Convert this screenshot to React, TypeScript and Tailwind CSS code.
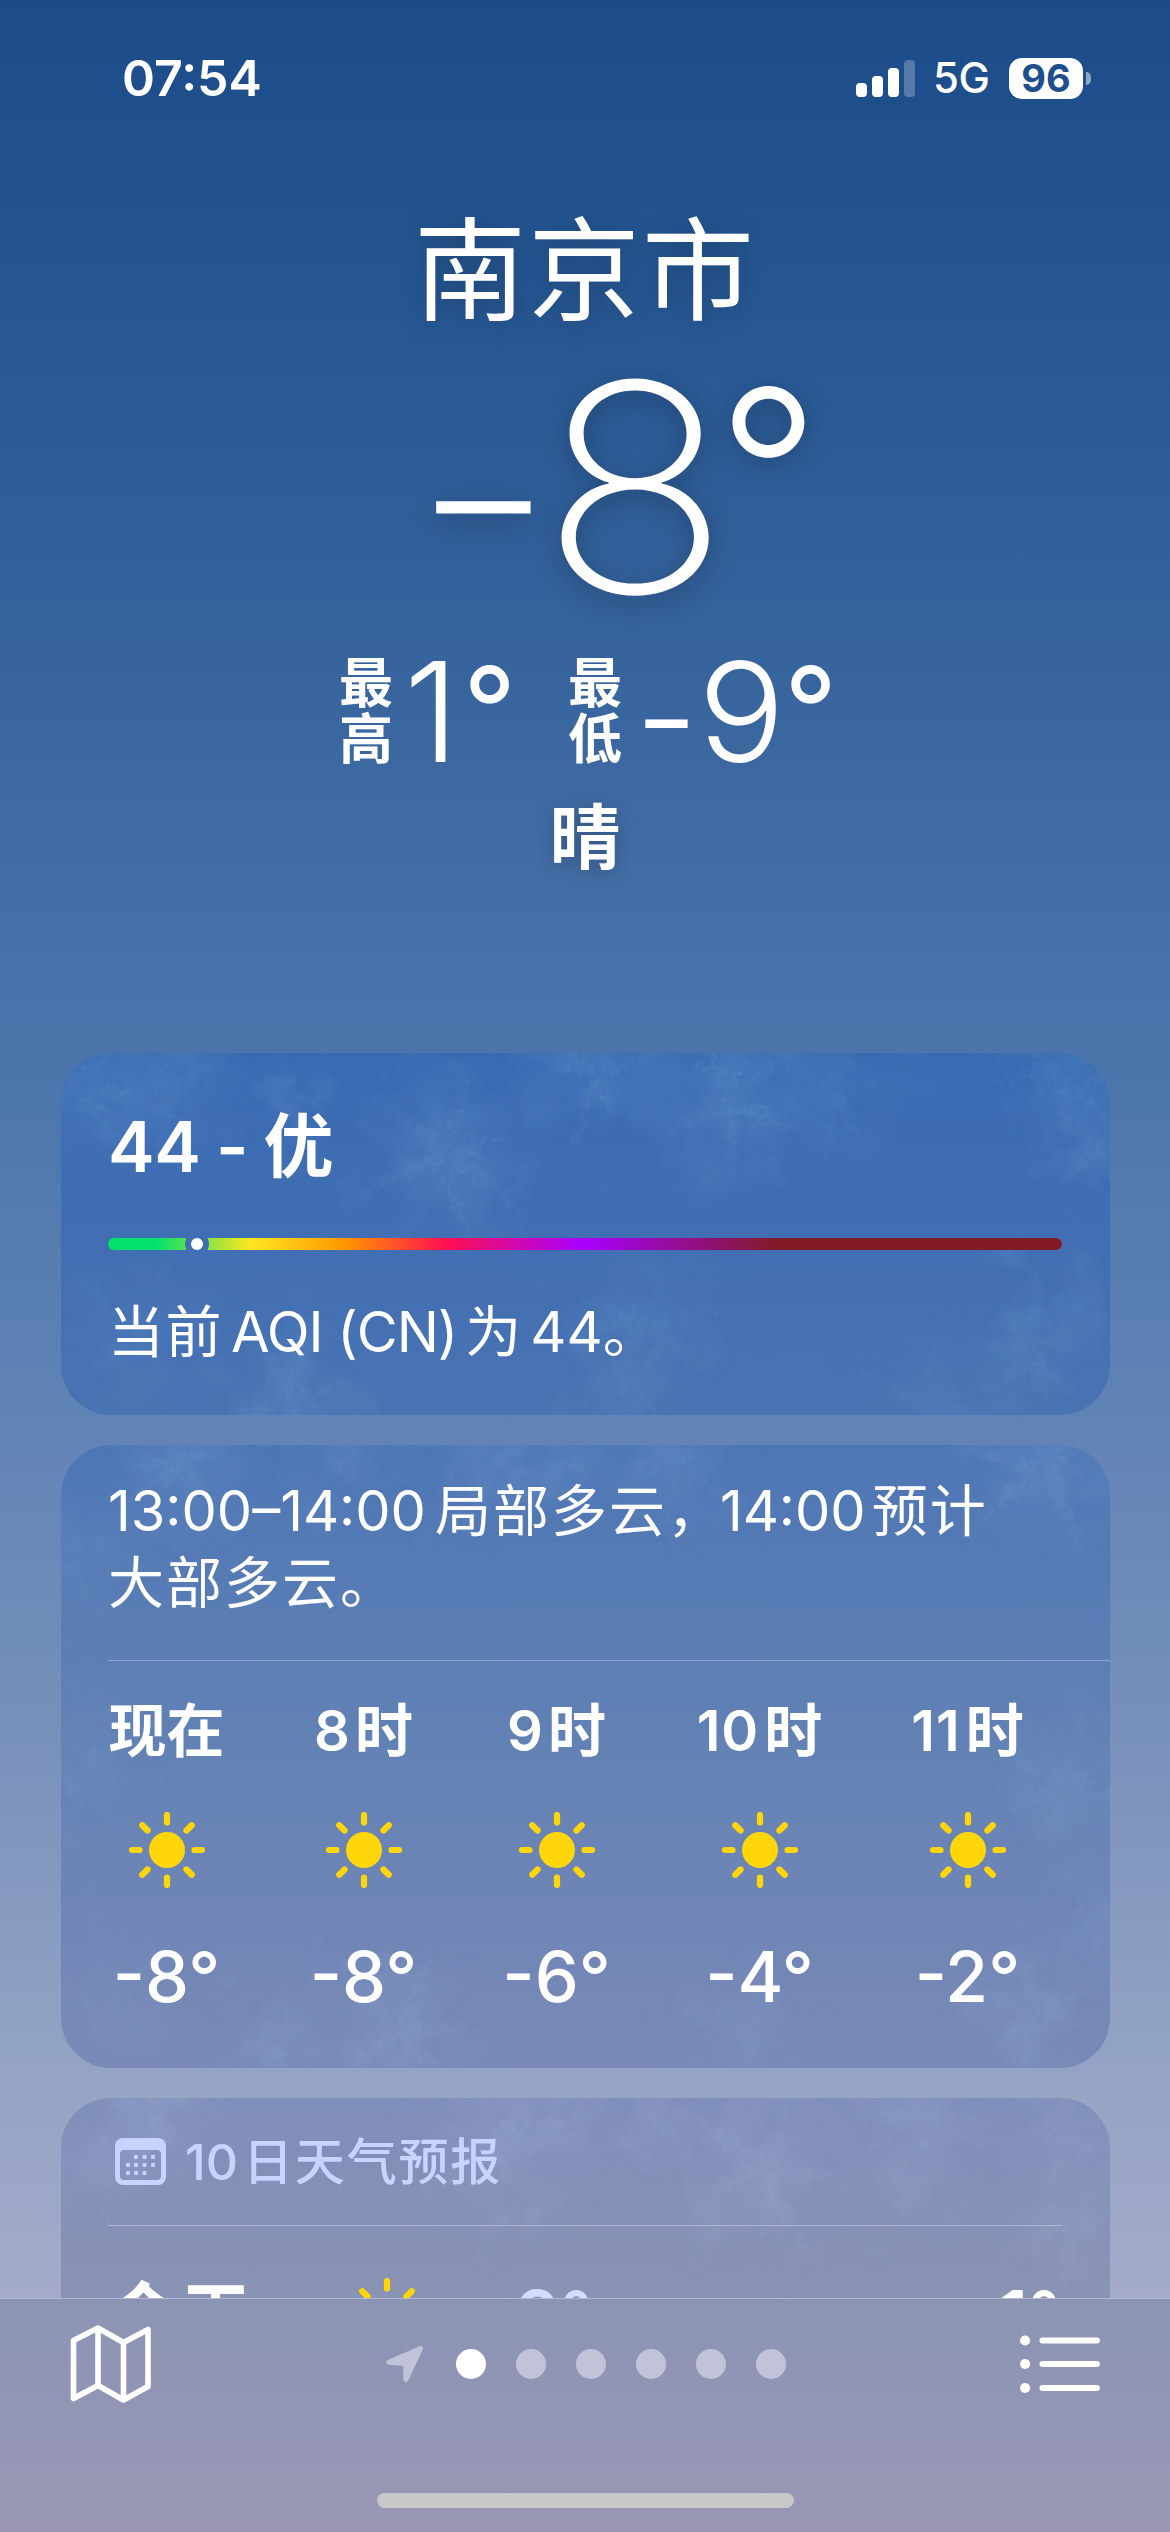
import { type ReactNode } from "react";
import { clsx } from "clsx";

type Flake = { x: number; y: number; r: number; o: number };

const AQI_FLAKES: Flake[] = [
  { x: 390, y: 97, r: 85, o: 1 },
  { x: 665, y: 42, r: 95, o: 1 },
  { x: 535, y: 20, r: 80, o: 0.9 },
  { x: 222, y: 42, r: 40, o: 0.8 },
  { x: 25, y: 30, r: 90, o: 0.8 },
  { x: 115, y: 25, r: 75, o: 0.7 },
  { x: 775, y: 35, r: 75, o: 0.5 },
  { x: 1005, y: 25, r: 75, o: 0.8 },
  { x: 1028, y: 100, r: 50, o: 0.8 },
  { x: 985, y: 252, r: 40, o: 0.6 },
  { x: 965, y: 305, r: 70, o: 0.7 },
  { x: 585, y: 270, r: 75, o: 0.6 },
  { x: 228, y: 352, r: 80, o: 0.9 },
  { x: 70, y: 290, r: 80, o: 0.5 },
  { x: 560, y: 345, r: 60, o: 0.6 },
  { x: 870, y: 350, r: 70, o: 0.5 },
];

const HOURLY_FLAKES: Flake[] = [
  { x: 125, y: 15, r: 75, o: 0.9 },
  { x: 280, y: 10, r: 60, o: 0.7 },
  { x: 425, y: 15, r: 75, o: 0.7 },
  { x: 495, y: 15, r: 50, o: 0.7 },
  { x: 610, y: 20, r: 80, o: 0.7 },
  { x: 980, y: 15, r: 90, o: 1 },
  { x: 25, y: 110, r: 80, o: 0.5 },
  { x: 20, y: 330, r: 90, o: 0.5 },
  { x: 45, y: 560, r: 90, o: 0.5 },
  { x: 213, y: 595, r: 60, o: 0.9 },
  { x: 335, y: 590, r: 80, o: 1 },
  { x: 675, y: 585, r: 70, o: 0.6 },
  { x: 970, y: 565, r: 70, o: 0.9 },
  { x: 1005, y: 340, r: 80, o: 0.7 },
  { x: 1040, y: 480, r: 70, o: 0.6 },
];

const DAILY_FLAKES: Flake[] = [
  { x: 95, y: 12, r: 70, o: 1 },
  { x: 30, y: 60, r: 80, o: 0.6 },
  { x: 430, y: 35, r: 80, o: 0.8 },
  { x: 480, y: 15, r: 60, o: 0.8 },
  { x: 592, y: 32, r: 50, o: 0.8 },
  { x: 705, y: 75, r: 90, o: 1 },
  { x: 850, y: 12, r: 65, o: 0.9 },
  { x: 465, y: 100, r: 60, o: 0.5 },
  { x: 850, y: 90, r: 60, o: 0.6 },
  { x: 1005, y: 30, r: 80, o: 0.8 },
  { x: 1015, y: 130, r: 65, o: 0.8 },
];

function makeRandom(seed: number) {
  let s = seed;
  return () => {
    s = (s * 16807) % 2147483647;
    return s / 2147483647;
  };
}

// One ice flower: crooked arms with short barbs that get shorter toward the tip.
function flakePath({ x, y, r }: Flake, seed: number) {
  const rand = makeRandom(seed * 7919 + 13);
  const arms = 6;
  const start = rand() * Math.PI;
  let d = "";
  for (let a = 0; a < arms; a += 1) {
    let angle = start + (a / arms) * Math.PI * 2 + (rand() - 0.5) * 0.7;
    const length = r * (0.6 + rand() * 0.8);
    let px = x;
    let py = y;
    for (let t = 0; t < length; t += 3) {
      angle += (rand() - 0.5) * 0.14;
      px += Math.cos(angle) * 3;
      py += Math.sin(angle) * 3;
      const barb = (1 - t / length) * r * 0.24 * (0.4 + rand());
      for (const side of [-1, 1]) {
        const b = angle + side * (0.3 + rand() * 0.7);
        d += `M${px.toFixed(1)} ${py.toFixed(1)}l${(Math.cos(b) * barb).toFixed(1)} ${(Math.sin(b) * barb).toFixed(1)}`;
      }
    }
  }
  return d;
}

function Frost({ id, flakes, color }: { id: string; flakes: Flake[]; color: string }) {
  return (
    <svg className="pointer-events-none absolute inset-0 h-full w-full" aria-hidden="true">
      <defs>
        <filter id={`${id}-rough`} x="-10%" y="-10%" width="120%" height="120%">
          <feTurbulence type="fractalNoise" baseFrequency="0.14" numOctaves="3" seed="4" result="noise" />
          <feDisplacementMap in="SourceGraphic" in2="noise" scale="20" xChannelSelector="R" yChannelSelector="G" />
          <feGaussianBlur stdDeviation="0.8" />
        </filter>
        <filter id={`${id}-cloud`} x="-10%" y="-10%" width="120%" height="120%">
          <feTurbulence type="fractalNoise" baseFrequency="0.018" numOctaves="5" seed="9" result="noise" />
          <feDisplacementMap in="SourceGraphic" in2="noise" scale="150" xChannelSelector="R" yChannelSelector="G" />
          <feGaussianBlur stdDeviation="1.5" />
        </filter>
        <radialGradient id={`${id}-haze`}>
          <stop offset="0" stopColor={color} stopOpacity="0.14" />
          <stop offset="1" stopColor={color} stopOpacity="0" />
        </radialGradient>
      </defs>
      <g filter={`url(#${id}-cloud)`}>
        {flakes.map((f, i) => (
          <circle key={i} cx={f.x} cy={f.y} r={f.r * 1.15} fill={`url(#${id}-haze)`} opacity={f.o} />
        ))}
      </g>
      <g filter={`url(#${id}-rough)`} stroke={color} strokeWidth="0.9" fill="none">
        {flakes.map((f, i) => (
          <path key={i} d={flakePath(f, i + id.length)} opacity={f.o * 0.15} />
        ))}
      </g>
    </svg>
  );
}

function Card({ className, children }: { className?: string; children: ReactNode }) {
  return (
    <section className={clsx("relative mx-auto w-[1049px] shrink-0 overflow-hidden rounded-[50px]", className)}>
      {children}
    </section>
  );
}

function SunIcon() {
  return (
    <svg viewBox="-38 -38 76 76" className="h-[76px] w-[76px] shrink-0">
      <circle r="18" fill="#ffd60a" />
      {[0, 45, 90, 135, 180, 225, 270, 315].map((deg) => (
        <line
          key={deg}
          y1="-35"
          y2="-27.5"
          transform={`rotate(${deg})`}
          stroke="#ffd60a"
          strokeWidth="6.2"
          strokeLinecap="round"
        />
      ))}
    </svg>
  );
}

function CalendarIcon() {
  const dots = [
    [21, 19], [29.5, 19], [38, 19],
    [13, 27], [21, 27], [29.5, 27], [38, 27],
    [13, 35], [21, 35], [29.5, 35],
  ];
  return (
    <svg viewBox="0 0 51 47" className="h-[47px] w-[51px]" fill="#c6d4ff">
      <path
        fillRule="evenodd"
        d="M8 0H43A8 8 0 0 1 51 8V39A8 8 0 0 1 43 47H8A8 8 0 0 1 0 39V8A8 8 0 0 1 8 0ZM9 12A4 4 0 0 0 5 16V38A4 4 0 0 0 9 42H42A4 4 0 0 0 46 38V16A4 4 0 0 0 42 12Z"
      />
      {dots.map(([x, y]) => (
        <rect key={`${x}-${y}`} x={x - 2} y={y - 2} width="4" height="4" rx="1" />
      ))}
    </svg>
  );
}

function MapIcon() {
  return (
    <svg viewBox="0 0 84 84" className="h-[84px] w-[84px]" fill="none" stroke="#fff" strokeWidth="5.6" strokeLinejoin="round">
      <path d="M4.5 18.5L29 6L54.5 20.5L79 7.5V64.5L54.5 78L29 63.5L4.5 76.5Z" />
      <path d="M29 6V63.5M54.5 20.5V78" />
    </svg>
  );
}

function ListIcon() {
  return (
    <svg viewBox="0 0 80 60" className="h-[60px] w-[80px]" stroke="#fff" strokeWidth="5.8" strokeLinecap="round">
      {[6.5, 30, 54].map((y) => (
        <g key={y}>
          <circle cx="5.1" cy={y} r="5.1" fill="#fff" stroke="none" />
          <line x1="22.4" x2="77" y1={y} y2={y} />
        </g>
      ))}
    </svg>
  );
}

function StatusBar() {
  return (
    <header className="flex h-[156px] shrink-0 items-center">
      <span className="ml-[122px] w-[200px] text-[50px] leading-none font-semibold">07:54</span>
      <div className="ml-[534px] flex h-[38px] items-end gap-[5px]">
        <i className="h-[14px] w-[11px] rounded-[4px] bg-white" />
        <i className="h-[21px] w-[11px] rounded-[4px] bg-white" />
        <i className="h-[29px] w-[11px] rounded-[4px] bg-white" />
        <i className="h-[37px] w-[11px] rounded-[4px] bg-white/25" />
      </div>
      <span className="ml-[18px] w-[60px] text-[42px] leading-none font-medium tracking-[-0.5px]">5G</span>
      <div className="ml-[16px] flex h-[41px] w-[74px] items-center justify-center rounded-[13px] bg-white text-[38px] leading-none font-bold text-[#1e4e8b]">
        96
      </div>
      <i className="ml-[3px] h-[13px] w-[5px] rounded-r-full bg-white/50" />
    </header>
  );
}

function Hero() {
  return (
    <div className="flex shrink-0 flex-col items-center">
      <h1 className="mt-[55px] h-[120px] text-[112px] leading-[120px] font-normal tracking-[2px] [text-shadow:0_4px_24px_rgba(0,0,0,0.22)]">
        南京市
      </h1>
      <div className="mt-[26px] flex h-[260px] w-[370px] items-start pl-[10px] text-[291px] font-extralight whitespace-nowrap [text-shadow:0_6px_26px_rgba(0,0,0,0.25)]">
        <span className="w-[137px] shrink-0 origin-left scale-x-[1.13] leading-[271px]">-</span>
        <span className="w-[170px] shrink-0 scale-x-[1.08] text-center leading-[260px]">8</span>
        <span className="shrink-0 text-[226px] leading-none font-[270]">°</span>
      </div>
      <div className="mt-[39px] flex h-[112px] w-[492px] items-start text-[139px] font-light whitespace-nowrap">
        <span className="mr-[11px] w-[54px] shrink-0 text-[54px] leading-[56px] font-semibold whitespace-normal">最高</span>
        <span className="w-[59px] shrink-0 leading-[112px]">1</span>
        <span className="w-[105px] shrink-0 text-[117px] leading-[106px] font-[400]">°</span>
        <span className="mr-[13px] w-[54px] shrink-0 text-[54px] leading-[56px] font-semibold whitespace-normal">最低</span>
        <span className="w-[63px] shrink-0 leading-[122px]">-</span>
        <span className="w-[86px] shrink-0 origin-left scale-x-[1.04] leading-[112px]">9</span>
        <span className="shrink-0 text-[117px] leading-[106px] font-[400]">°</span>
      </div>
      <p className="mt-[26px] h-[86px] text-[71px] leading-[86px] font-bold [text-shadow:0_4px_20px_rgba(0,0,0,0.22)]">晴</p>
    </div>
  );
}

function AqiCard() {
  return (
    <Card className="h-[362px] bg-linear-to-b from-[#396ab2] to-[#4973b3]">
      <Frost id="aqi" flakes={AQI_FLAKES} color="#8ec6e4" />
      <div className="relative flex flex-col px-[47.5px]">
        <p className="mt-[52px] h-[84px] text-[70px] leading-[84px] font-semibold tracking-[-0.3px] [word-spacing:-2px]">44 - 优</p>
        <div className="mt-[49px] flex h-[12px] items-center overflow-hidden rounded-full bg-[linear-gradient(90deg,#00e26b_5%,#ffe620_15%,#ff9500_25%,#ff1050_35.3%,#a800ff_49.7%,#821a28_70%)]">
          <div className="ml-[77px] flex h-[24px] w-[24px] shrink-0 items-center justify-center rounded-full bg-[#3d6eb2]">
            <div className="h-[12px] w-[12px] rounded-full bg-white" />
          </div>
        </div>
        <p className="mt-[46px] flex h-[72px] text-[56px] leading-[72px] whitespace-nowrap">
          <span className="mr-[8px] tracking-[1.5px]">当前</span>
          <span className="mr-[8px] tracking-[-1px]">AQI (CN)</span>
          <span className="mr-[9px]">为</span>
          <span>44。</span>
        </p>
      </div>
    </Card>
  );
}

const HOURS = [
  { num: "", unit: "现在", temp: "-8°", width: "w-[116px] ml-[48px]" },
  { num: "8", unit: "时", temp: "-8°", width: "w-[100px] ml-[89px]" },
  { num: "9", unit: "时", temp: "-6°", width: "w-[100px] ml-[93px]" },
  { num: "10", unit: "时", temp: "-4°", width: "w-[126px] ml-[90px]" },
  { num: "11", unit: "时", temp: "-2°", width: "w-[116px] ml-[87px]" },
];

function HourlyCard() {
  return (
    <Card className="mt-[30px] h-[623px] bg-linear-to-b from-[#4d76b5] via-[#6382b4] to-[#7a89b7]">
      <Frost id="hourly" flakes={HOURLY_FLAKES} color="#9cc4e6" />
      <div className="relative">
        <div className="ml-[47.5px] h-[216px] border-b border-white/30 pt-[30px] text-[56px] leading-[72px] whitespace-nowrap">
          <p className="flex">
            <span className="mr-[9px]">13:00–14:00</span>
            <span className="mr-[-5px] tracking-[2px]">局部多云，</span>
            <span className="mr-[6px]">14:00</span>
            <span className="tracking-[2px]">预计</span>
          </p>
          <p className="tracking-[2px]">大部多云。</p>
        </div>
        <div className="flex">
          {HOURS.map((h) => (
            <div key={h.num + h.unit} className={clsx("flex shrink-0 flex-col items-center whitespace-nowrap", h.width)}>
              <p className="mt-[34px] flex h-[72px] gap-[5px] text-[56px] leading-[72px] font-semibold">
                {h.num && <span className={clsx(h.num.length > 1 && "tracking-[1px]")}>{h.num}</span>}
                <span className="text-[58px]">{h.unit}</span>
              </p>
              <div className="mt-[45px]">
                <SunIcon />
              </div>
              <p className="mt-[49px] h-[80px] text-[70px] leading-[80px] font-medium">{h.temp}</p>
            </div>
          ))}
        </div>
      </div>
    </Card>
  );
}

function DailyCard() {
  return (
    <Card className="mt-[30px] h-[400px] bg-[linear-gradient(180deg,#7f8eba_0px,#8993b4_200px)]">
      <Frost id="daily" flakes={DAILY_FLAKES} color="#b4c8e6" />
      <div className="relative px-[47.5px]">
        <div className="flex h-[128px] items-center border-b border-white/30 text-[50px] leading-[60px] font-medium whitespace-nowrap text-[#c6d4ff]">
          <div className="ml-[7px] w-[70px]">
            <CalendarIcon />
          </div>
          <span className="mr-[5px]">10</span>
          <span className="tracking-[1.8px]">日天气预报</span>
        </div>
        <div className="mt-[48px] flex h-[84px] items-center text-[70px] leading-[84px] font-semibold whitespace-nowrap">
          <span className="w-[241px] tracking-[3px]">今天</span>
          <SunIcon />
          <span className="ml-[58px] text-[#d3ddff]">-9°</span>
          <span className="mr-[2px] ml-auto">1°</span>
        </div>
      </div>
    </Card>
  );
}

function BottomBar() {
  return (
    <footer className="flex h-[234px] shrink-0 flex-col border-t border-[#b3b9d5] bg-linear-to-b from-[#8c94b4] to-[#9997b5]">
      <div className="flex h-[130px] items-center">
        <div className="ml-[69px]">
          <MapIcon />
        </div>
        <svg viewBox="0 0 42 42" className="ml-[231px] h-[42px] w-[42px]" fill="#c1c4d8" stroke="#c1c4d8" strokeWidth="5" strokeLinejoin="round">
          <path d="M36.5 5.5L4.7 19.3L21.7 20.5L22 36.5Z" />
        </svg>
        <div className="ml-[30px] flex gap-[30px]">
          <i className="h-[30px] w-[30px] rounded-full bg-white" />
          {[1, 2, 3, 4, 5].map((n) => (
            <i key={n} className="h-[30px] w-[30px] rounded-full bg-[#c1c4d8]" />
          ))}
        </div>
        <div className="ml-[234px]">
          <ListIcon />
        </div>
      </div>
      <div className="mx-auto mt-[64px] h-[15px] w-[417px] rounded-full bg-[#c8c8c8]" />
    </footer>
  );
}

export default function App() {
  return (
    <div className="flex h-[2532px] w-[1170px] flex-col overflow-hidden bg-[linear-gradient(180deg,#1b4b88_0px,#22538f_200px,#2a5a95_400px,#34629b_620px,#436da5_880px,#4a74aa_1040px,#6083b5_1410px,#758fba_1700px,#95a4c5_2080px,#a4aac8_2298px)] font-['Inter','Noto_Sans_CJK_SC',sans-serif] text-white">
      <div className="flex h-[2298px] shrink-0 flex-col overflow-hidden">
        <StatusBar />
        <Hero />
        <div className="mt-[173px] flex shrink-0 flex-col">
          <AqiCard />
          <HourlyCard />
          <DailyCard />
        </div>
      </div>
      <BottomBar />
    </div>
  );
}
